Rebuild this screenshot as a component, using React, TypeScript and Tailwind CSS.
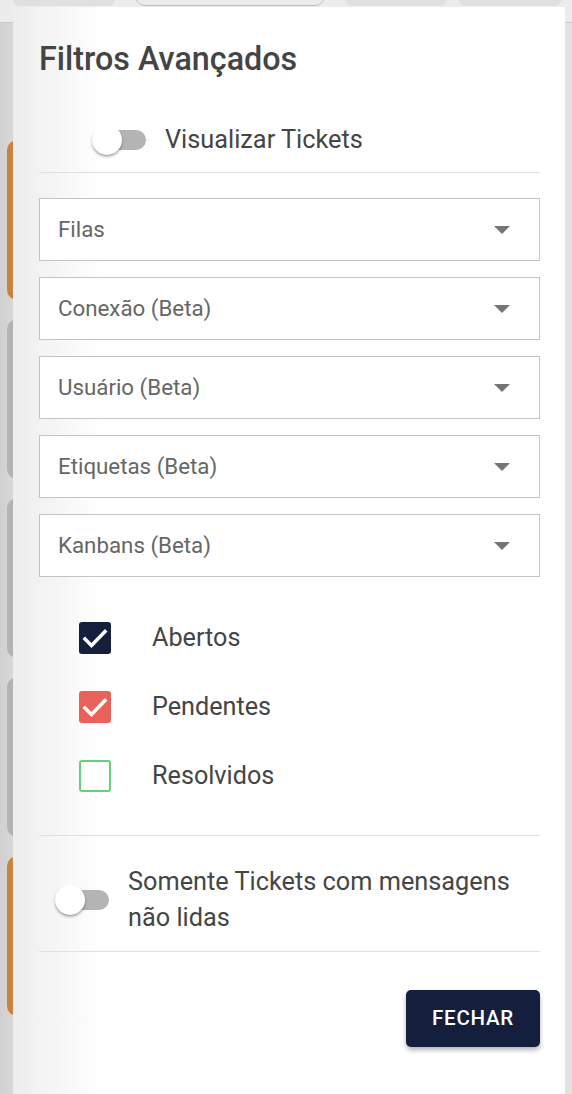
import React from "react";

function Switch() {
  return (
    <div className="relative w-[54px] h-[30px] shrink-0">
      <div className="absolute left-[7px] right-0 top-[5px] h-[20px] rounded-full bg-[#b4b4b4]" />
      <div className="absolute left-0 top-0 w-[30px] h-[30px] rounded-full bg-white shadow-[0_2px_3px_rgba(0,0,0,0.28),0_1px_1px_rgba(0,0,0,0.14)]" />
    </div>
  );
}

function Select({ label }: { label: string }) {
  return (
    <div className="h-[63px] border border-[#c4c4c4] bg-white flex items-center justify-between pl-[18px] pr-[29px]">
      <span className="text-[22.3px] text-[#666666]">{label}</span>
      <svg width="16" height="8" viewBox="0 0 16 8">
        <path d="M0 0h16L8 8z" fill="#757575" />
      </svg>
    </div>
  );
}

function Check({ kind, label }: { kind: "navy" | "red" | "empty"; label: string }) {
  const box =
    kind === "navy"
      ? "bg-[#141f3d] rounded-[3px]"
      : kind === "red"
      ? "bg-[#e9625a] rounded-[3px]"
      : "border-[2.5px] border-[#66d07a] rounded-[3px] bg-white";
  return (
    <div className="h-[69px] flex items-center pl-[40px]">
      <div className={`w-[32px] h-[32px] shrink-0 ${box}`}>
        {kind !== "empty" && (
          <svg width="32" height="32" viewBox="0 0 32 32">
            <path d="M6 17l6.5 6.5L26 9.5" fill="none" stroke="#ffffff" strokeWidth="3.5" strokeLinecap="square" />
          </svg>
        )}
      </div>
      <span className="ml-[41px] text-[25.2px] text-[#454545]">{label}</span>
    </div>
  );
}

export default function App() {
  const bgCards = ["bg-[#c8843e]", "bg-[#b3b3b3]", "bg-[#b3b3b3]", "bg-[#b3b3b3]", "bg-[#c8843e]"];
  return (
    <div className="relative w-[572px] h-[1094px] overflow-hidden font-['Roboto',sans-serif] bg-[#d8d8d8]">
      {/* background page */}
      <div className="flex flex-col h-full">
        <div className="h-[23px] shrink-0 bg-[#ececec] border-b border-[#c9c9c9] flex items-start">
          <div className="ml-[13px] w-[102px] h-[6px] rounded-b-[6px] bg-[#e0e0e0]" />
          <div className="ml-[20px] w-[190px] h-[20px] -mt-[14px] rounded-full border border-[#bdbdbd] bg-[#ececec]" />
          <div className="ml-[20px] w-[102px] h-[6px] rounded-b-[6px] bg-[#e0e0e0]" />
          <div className="ml-[12px] w-[102px] h-[6px] rounded-b-[6px] bg-[#e0e0e0]" />
        </div>
        <div className="flex-1 flex">
          <div className="w-[20px] bg-gradient-to-r from-[#d0d0d0] to-[#dcdcdc] flex flex-col gap-[19px] pt-[117px] pl-[7px]">
            {bgCards.map((c, i) => (
              <div key={i} className={`h-[160px] rounded-l-[10px] ${c}`} />
            ))}
          </div>
          <div className="flex-1 bg-[#e2e2e2]" />
        </div>
      </div>

      {/* dialog */}
      <div className="absolute left-[13px] top-[7px] w-[552px] h-[1087px] bg-[linear-gradient(to_right,#ededed_0px,#ffffff_90px)] pl-[26px] pr-[25px] pt-[32px] flex flex-col">
        <h2 className="text-[32.3px] leading-[40px] font-medium text-[#444444]">Filtros Avançados</h2>

        <div className="mt-[41px] h-[40px] flex items-center pl-[53px]">
          <Switch />
          <span className="ml-[19px] text-[25.3px] text-[#454545]">Visualizar Tickets</span>
        </div>

        <div className="mt-[12px] h-px bg-[#e0e0e0]" />

        <div className="mt-[25px] flex flex-col gap-[16px]">
          <Select label="Filas" />
          <Select label="Conexão (Beta)" />
          <Select label="Usuário (Beta)" />
          <Select label="Etiquetas (Beta)" />
          <Select label="Kanbans (Beta)" />
        </div>

        <div className="mt-[26px] flex flex-col">
          <Check kind="navy" label="Abertos" />
          <Check kind="red" label="Pendentes" />
          <Check kind="empty" label="Resolvidos" />
        </div>

        <div className="mt-[25px] h-px bg-[#e0e0e0]" />

        <div className="mt-[28px] flex items-center pl-[16px]">
          <Switch />
          <span className="ml-[19px] text-[25.3px] leading-[36px] text-[#454545]">
            Somente Tickets com mensagens
            <br />
            não lidas
          </span>
        </div>

        <div className="mt-[15px] h-px bg-[#e0e0e0]" />

        <div className="mt-[38px] flex justify-end">
          <button className="w-[134px] h-[57px] rounded-[5px] bg-[#141f3d] text-white text-[20.5px] font-medium tracking-[0.035em] shadow-[0_3px_5px_rgba(0,0,0,0.3)]">
            FECHAR
          </button>
        </div>
      </div>
    </div>
  );
}
